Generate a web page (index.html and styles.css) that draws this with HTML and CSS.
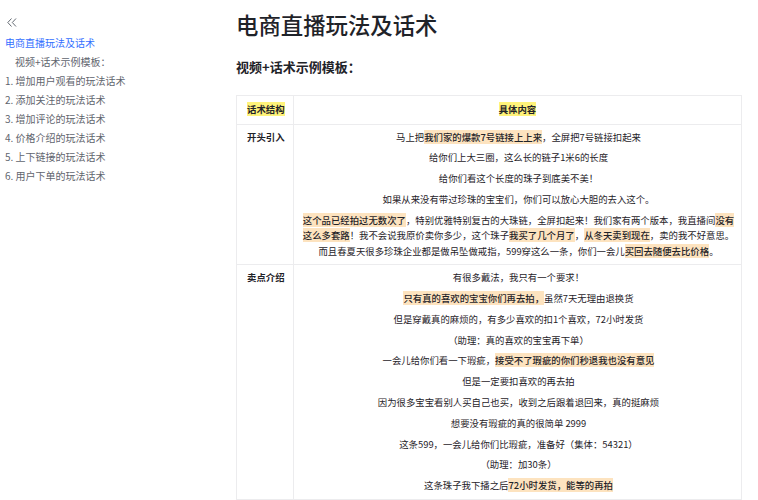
FILE: index.html
```html
<!DOCTYPE html>
<html lang="zh">
<head>
<meta charset="utf-8">
<title>电商直播玩法及话术</title>
<link rel="stylesheet" href="styles.css">
</head>
<body>
<div class="page">
  <nav class="sidebar">
    <div class="collapse">
      <svg width="10" height="9" viewBox="0 0 10 9" fill="none" stroke="#646a73" stroke-width="1">
        <polyline points="4.5,0.5 0.8,4.5 4.5,8.5"/>
        <polyline points="9,0.5 5.3,4.5 9,8.5"/>
      </svg>
    </div>
    <ul class="toc">
      <li class="toc-item active">电商直播玩法及话术</li>
      <li class="toc-item sub">视频+话术示例模板：</li>
      <li class="toc-item">1. 增加用户观看的玩法话术</li>
      <li class="toc-item">2. 添加关注的玩法话术</li>
      <li class="toc-item">3. 增加评论的玩法话术</li>
      <li class="toc-item">4. 价格介绍的玩法话术</li>
      <li class="toc-item">5. 上下链接的玩法话术</li>
      <li class="toc-item">6. 用户下单的玩法话术</li>
    </ul>
  </nav>
  <main class="content">
    <h1 class="title">电商直播玩法及话术</h1>
    <h2 class="subtitle">视频+话术示例模板：</h2>
    <table class="script-table">
      <colgroup><col class="col-a"><col class="col-b"></colgroup>
      <thead>
        <tr>
          <th class="th-left"><span class="hl-y">话术结构</span></th>
          <th class="th-center"><span class="hl-y">具体内容</span></th>
        </tr>
      </thead>
      <tbody>
        <tr>
          <td class="label">开头引入</td>
          <td class="body">
            <p>马上把<span class="hl">我们家的爆款7号链接上上来</span>，全屏把7号链接扣起来</p>
            <p>给你们上大三圈，这么长的链子1米6的长度</p>
            <p>给你们看这个长度的珠子到底美不美！</p>
            <p>如果从来没有带过珍珠的宝宝们，你们可以放心大胆的去入这个。</p>
            <p><span class="hl">这个品已经拍过无数次了</span>，特别优雅特别复古的大珠链，全屏扣起来！我们家有两个版本，我直播间<span class="hl">没有这么多套路</span>！我不会说我原价卖你多少，这个珠子<span class="hl">我买了几个月了</span>，<span class="hl">从冬天卖到现在</span>，卖的我不好意思。而且春夏天很多珍珠企业都是做吊坠做戒指，599穿这么一条，你们一会儿<span class="hl">买回去随便去比价格</span>。</p>
          </td>
        </tr>
        <tr>
          <td class="label">卖点介绍</td>
          <td class="body">
            <p>有很多戴法，我只有一个要求！</p>
            <p><span class="hl">只有真的喜欢的宝宝你们再去拍，</span>虽然7天无理由退换货</p>
            <p>但是穿戴真的麻烦的，有多少喜欢的扣1个喜欢，72小时发货</p>
            <p>（助理：真的喜欢的宝宝再下单）</p>
            <p>一会儿给你们看一下瑕疵，<span class="hl">接受不了瑕疵的你们秒退我也没有意见</span></p>
            <p>但是一定要扣喜欢的再去拍</p>
            <p>因为很多宝宝看别人买自己也买，收到之后跟着退回来，真的挺麻烦</p>
            <p>想要没有瑕疵的真的很简单 2999</p>
            <p>这条599，一会儿给你们比瑕疵，准备好（集体：54321）</p>
            <p>（助理：加30条）</p>
            <p>这条珠子我下播之后<span class="hl">72小时发货，能等的再拍</span></p>
          </td>
        </tr>
      </tbody>
    </table>
  </main>
</div>
</body>
</html>
```

FILE: styles.css
```css
* { box-sizing: border-box; }
html, body { margin: 0; padding: 0; background: #ffffff; }
body {
  font-family: "Noto Sans CJK SC", "Noto Sans", sans-serif;
  color: #1f2329;
}
.page {
  display: flex;
  width: 758px;
}
.sidebar {
  width: 236px;
  flex: none;
  padding: 16px 0 0 5px;
}
.collapse {
  height: 12px;
  display: flex;
  align-items: center;
  padding-left: 2px;
}
.collapse svg { display: block; }
.toc {
  list-style: none;
  margin: 5px 0 0;
  padding: 0;
}
.toc-item {
  font-size: 10px;
  line-height: 19px;
  height: 19px;
  color: #5f656e;
  white-space: nowrap;
}
.toc-item.active { color: #3370ff; }
.toc-item.sub { padding-left: 10px; }

.content {
  width: 505px;
  flex: none;
  padding-top: 9px;
}
.title {
  margin: 0;
  font-size: 22.4px;
  line-height: 30px;
  font-weight: 500;
  color: #1f2329;
  letter-spacing: 0;
}
.subtitle {
  margin: 18px 0 0;
  font-size: 13px;
  line-height: 20px;
  font-weight: 700;
  color: #1f2329;
}
.script-table {
  margin-top: 18px;
  width: 505px;
  border-collapse: collapse;
  table-layout: fixed;
  font-size: 9.4px;
  color: #1f2329;
}
.col-a { width: 57px; }
.col-b { width: 448px; }
.script-table th,
.script-table td {
  border: 1px solid #ececee;
  vertical-align: top;
}
.script-table th {
  height: 28px;
  padding: 6px 2px 6px 10px;
  line-height: 15.5px;
  font-weight: 700;
  vertical-align: middle;
  white-space: nowrap;
}
.th-left { text-align: left; }
.th-center { text-align: center; }
.script-table th.th-center { padding: 6px 4px; }
.hl-y { background: #fff37a; }
.label {
  padding: 5px 2px 5px 10px;
  line-height: 15.5px;
  font-weight: 700;
  white-space: nowrap;
}
.body {
  padding: 5px 4px 5px 6px;
  text-align: center;
}
.body p {
  margin: 0 0 5.3px;
  line-height: 15.5px;
}
.body p:last-child { margin-bottom: 0; }
.hl {
  background: #fde3bf;
  font-weight: 500;
}
```
